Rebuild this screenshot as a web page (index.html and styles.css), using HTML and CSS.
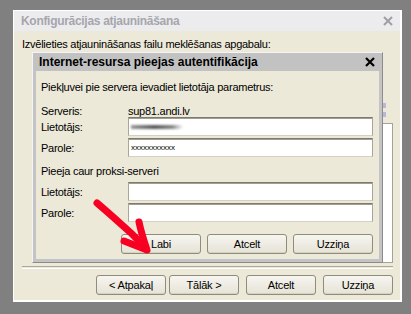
FILE: index.html
```html
<!DOCTYPE html>
<html lang="lv">
<head>
  <meta charset="UTF-8" />
  <title>Konfigurācijas atjaunināšana</title>
  <link rel="stylesheet" href="styles.css">
</head>
<body>
  <div class="screen">
    <div class="wizard">
      <div class="wizard-title">
        <span>Konfigurācijas atjaunināšana</span>
        <svg class="close" width="10" height="10" viewBox="0 0 10 10"><path d="M1 1 L9 9 M9 1 L1 9" /></svg>
      </div>
      <div class="wizard-body">
        <p class="hint">Izvēlieties atjaunināšanas failu meklēšanas apgabalu:</p>
        <div class="marks"><span></span><span></span></div>
        <div class="area-list"></div>
        <div class="separator"></div>
        <div class="wizard-buttons">
          <button class="btn">&lt; Atpakaļ</button>
          <button class="btn next">Tālāk &gt;</button>
          <button class="btn">Atcelt</button>
          <button class="btn">Uzziņa</button>
        </div>
      </div>

      <!-- modal login dialog over the wizard -->
      <div class="auth">
        <div class="auth-title">
          <span>Internet-resursa pieejas autentifikācija</span>
          <svg class="close" width="10" height="10" viewBox="0 0 10 10"><path d="M1 1 L9 9 M9 1 L1 9" /></svg>
        </div>
        <div class="auth-body">
          <p class="intro">Piekļuvei pie servera ievadiet lietotāja parametrus:</p>
          <div class="row server">
            <span>Serveris:</span>
            <span>sup81.andi.lv</span>
          </div>
          <div class="row">
            <label>Lietotājs:</label>
            <div class="field"><span class="blurred"></span></div>
          </div>
          <div class="row gap">
            <label>Parole:</label>
            <div class="field"><span class="secret">xxxxxxxxxxx</span></div>
          </div>
          <p class="section">Pieeja caur proksi-serveri</p>
          <div class="row">
            <label>Lietotājs:</label>
            <div class="field"></div>
          </div>
          <div class="row gap">
            <label>Parole:</label>
            <div class="field"></div>
          </div>
          <div class="auth-buttons">
            <button class="btn wide">Labi</button>
            <button class="btn wide">Atcelt</button>
            <button class="btn wide">Uzziņa</button>
          </div>
        </div>
      </div>
    </div>

    <svg class="arrow" width="411" height="314" viewBox="0 0 411 314">
      <path d="M97 203 C110 214 122 225 131 233 C137 239 142 244 146 249" />
      <path d="M139 222 C141 232 144 241 147 250 L124 241" />
    </svg>
  </div>
</body>
</html>
```

FILE: styles.css
```css
:root {
  --desk: #808080;
  --face: #ece9d8;
  --btn-border: #8f8c7c;
  --font-ui: "Liberation Sans", Arial, sans-serif;
}

body, html {
  margin: 0;
  padding: 0;
  background: var(--desk);
  font-family: var(--font-ui);
  font-size: 11px;
  color: #000;
}

p {
  margin: 0;
}

.screen {
  width: 411px;
  height: 314px;
  padding: 10px 0 0 13px;
  box-sizing: border-box;
  position: relative;
  overflow: hidden;
}

.wizard {
  width: 389px;
  height: 292px;
  box-sizing: border-box;
  border: 1px solid #fff;
  border-width: 1px 2px 2px 1px;
  background: var(--face);
  display: flex;
  flex-direction: column;
  position: relative;
}

.wizard-title {
  height: 20px;
  flex: none;
  background: #ececef;
  color: #a6a6aa;
  font-weight: bold;
  font-size: 12px;
  letter-spacing: -0.3px;
  display: flex;
  align-items: center;
  justify-content: space-between;
  padding: 0 7px 0 7px;
}

.wizard-title .close path {
  stroke: #a0a0a4;
  stroke-width: 2;
  fill: none;
}

.wizard-body {
  flex: 1;
  display: flex;
  flex-direction: column;
  padding: 7px 7px 0 8px;
}

.hint {
  height: 13px;
  line-height: 13px;
  letter-spacing: -0.25px;
}

/* bits of the hidden list's scrollbar peeking out */
.marks {
  height: 15px;
  margin-top: 52px;
  display: flex;
  flex-direction: column;
  align-items: flex-end;
  gap: 4px;
  padding-right: 7px;
}

.marks span {
  width: 3px;
  height: 5px;
  background: #b9b8d6;
}

.area-list {
  height: 138px;
  margin: 5px 0 0 40px;
  background: #fff;
  border: 1px solid #a5a296;
}

.separator {
  height: 1px;
  margin-top: 3px;
  border-top: 1px solid #aca899;
  border-bottom: 1px solid #fff;
}

.wizard-buttons {
  display: flex;
  justify-content: flex-end;
  gap: 7px;
  margin-top: 6px;
}

.wizard-buttons .next {
  margin-left: -4px;
}

.btn {
  width: 70px;
  height: 20px;
  padding: 0;
  border: 1px solid var(--btn-border);
  border-radius: 3px;
  background: linear-gradient(#f6f5f0, #e6e3d6);
  box-shadow: inset 0 -1px 0 #d6d2c2;
  font-family: var(--font-ui);
  font-size: 11px;
  letter-spacing: -0.2px;
  color: #000;
}

.btn.wide {
  width: 80px;
}

.auth {
  position: absolute;
  left: 18px;
  top: 41px;
  width: 351px;
  height: 211px;
  box-sizing: border-box;
  border: 1px solid;
  border-color: #f4f4f4 #8c8c8c #8c8c8c #f4f4f4;
  background: #c4c4c4;
  display: flex;
  flex-direction: column;
}

.auth-title {
  height: 18px;
  flex: none;
  background: #c2c2c2;
  font-weight: bold;
  font-size: 12px;
  display: flex;
  align-items: center;
  justify-content: space-between;
  padding: 0 7px 0 6px;
}

.auth-title .close path {
  stroke: #000;
  stroke-width: 2.2;
  fill: none;
}

.auth-body {
  flex: 1;
  margin: 0 3px 3px 3px;
  background: var(--face);
  padding: 10px 6px 0 5px;
  display: flex;
  flex-direction: column;
  letter-spacing: -0.25px;
}

.intro, .section {
  height: 13px;
  line-height: 13px;
}

.section {
  margin-top: 8px;
}

.row {
  display: grid;
  grid-template-columns: 87px 1fr;
  align-items: center;
  height: 19px;
}

.row.server {
  height: 13px;
  margin-top: 10px;
}

.row.gap {
  margin-top: 2px;
}

.section + .row {
  margin-top: 4px;
}

.field {
  height: 19px;
  box-sizing: border-box;
  background: #fff;
  border: 1px solid;
  border-color: #7e7b6e #a9a699 #d4d0c4 #a9a699;
  box-shadow: inset 0 1px 0 #a19e91;
  display: flex;
  align-items: center;
  padding-left: 2px;
}

.blurred {
  width: 52px;
  height: 4px;
  background: linear-gradient(90deg, #9a9a9a, #5a5a5a 45%, #8a8a8a 80%, rgba(200, 200, 200, 0));
  filter: blur(1.2px);
}

.secret {
  font-size: 8px;
  line-height: 8px;
  letter-spacing: 0;
}

.auth-buttons {
  display: flex;
  justify-content: flex-end;
  gap: 6px;
  margin-top: 12px;
}

.arrow {
  position: absolute;
  left: 0;
  top: 0;
  pointer-events: none;
}

.arrow path {
  fill: none;
  stroke: #f70022;
  stroke-width: 7;
  stroke-linecap: round;
  stroke-linejoin: round;
}
```
